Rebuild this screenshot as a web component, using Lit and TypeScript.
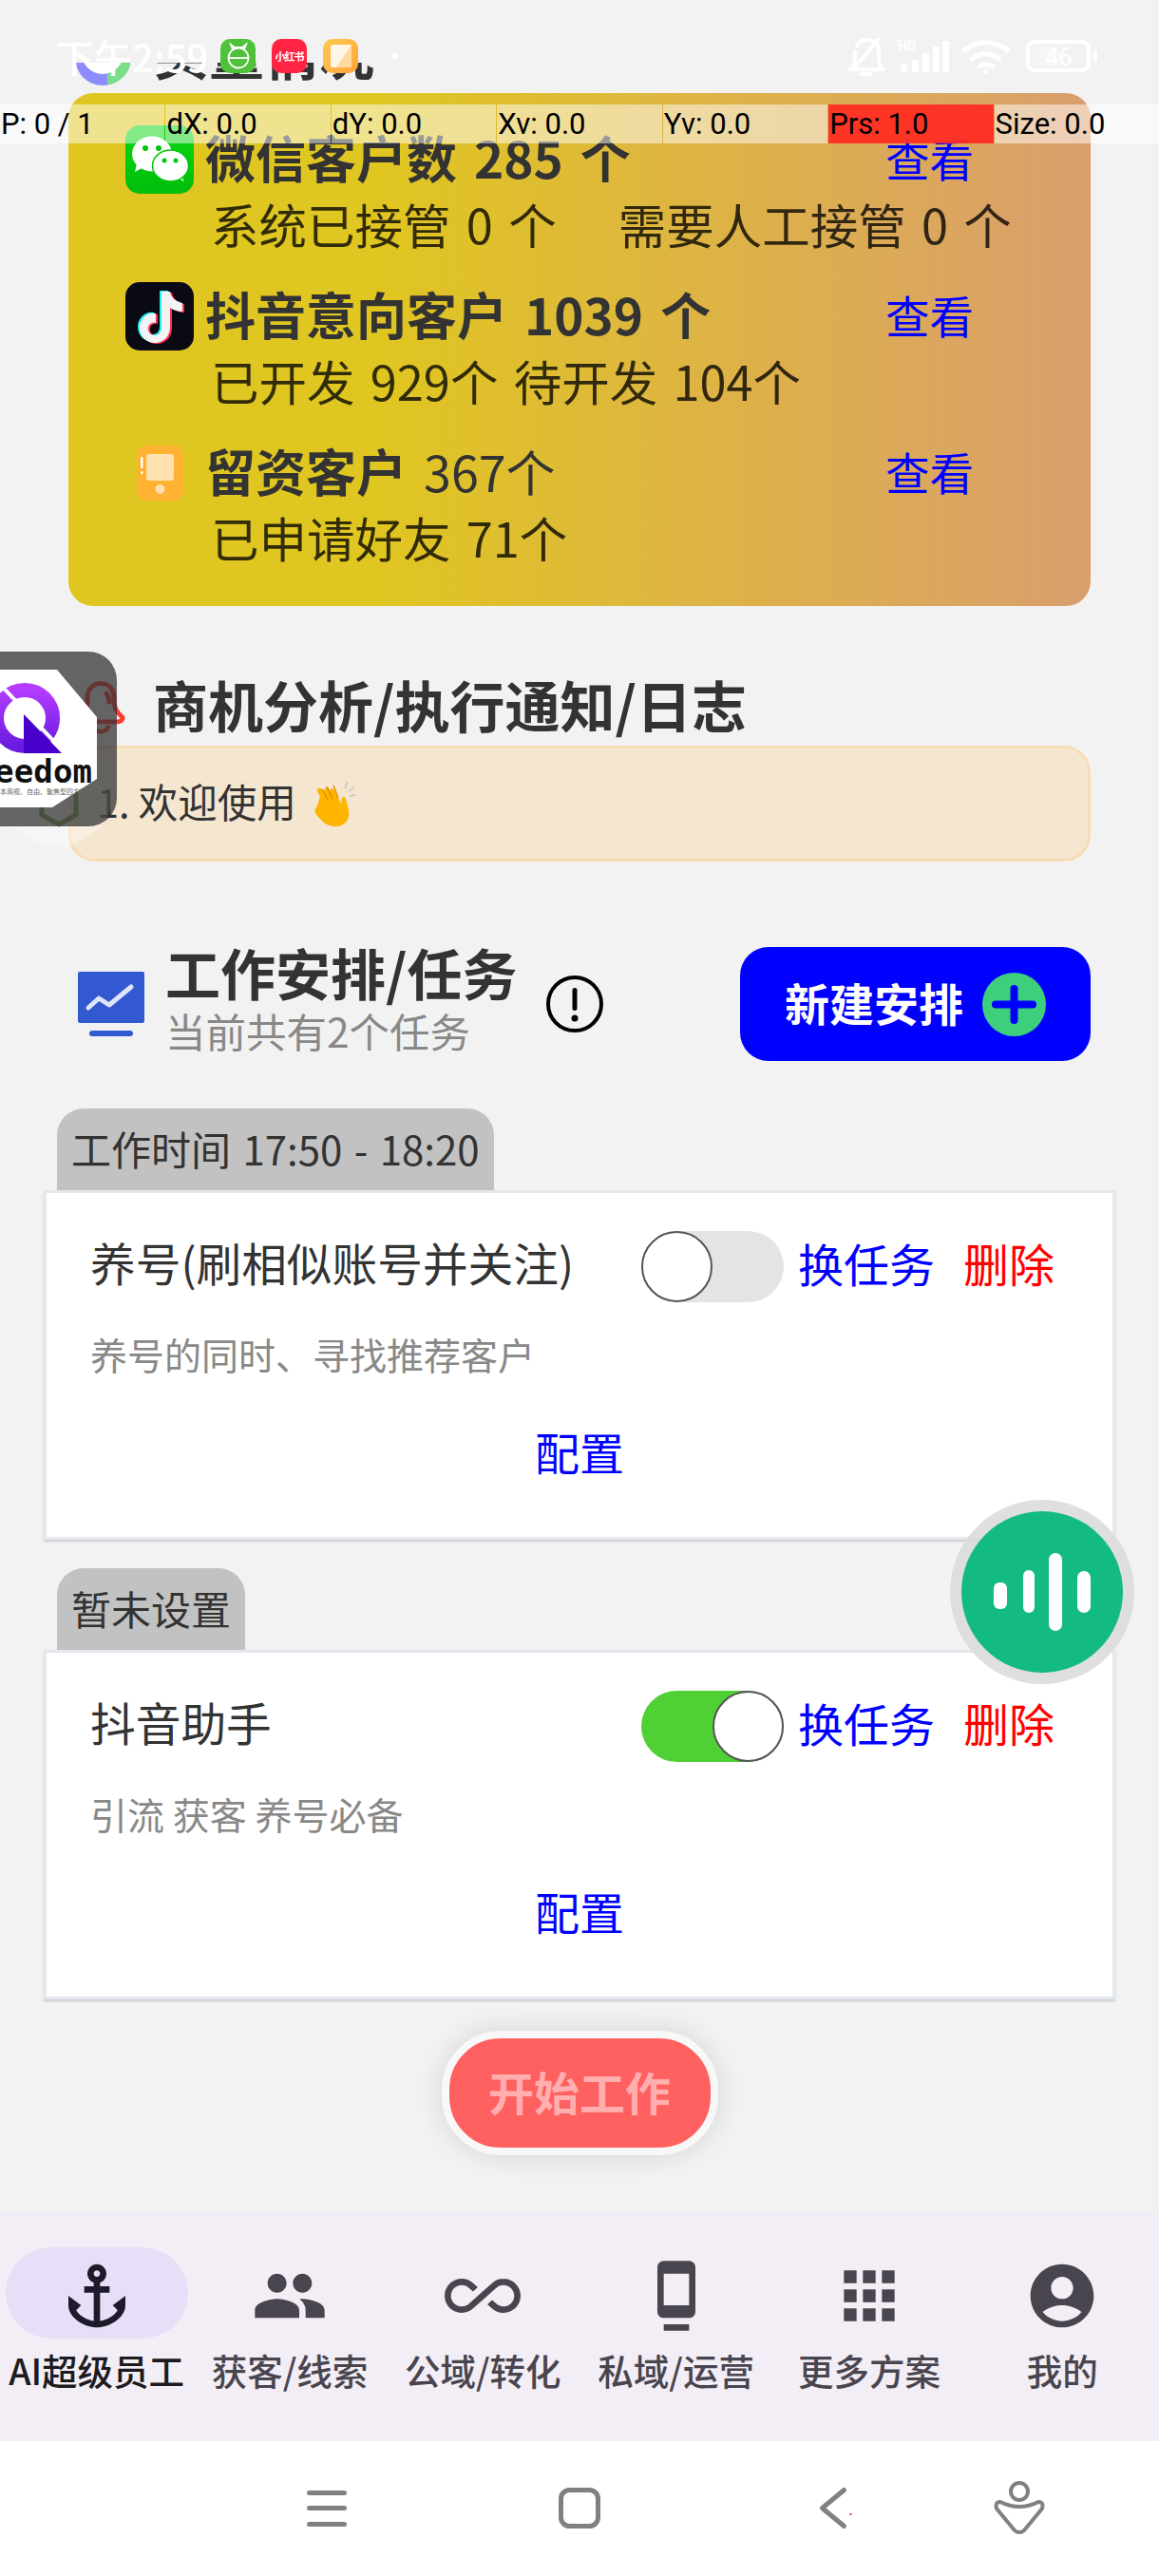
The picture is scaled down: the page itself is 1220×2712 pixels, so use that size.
import { LitElement, html, css } from "lit";
import { customElement } from "lit/decorators.js";

const wechat = html`<svg class="ico" viewBox="0 0 72 72"><defs><linearGradient id="wg" x1="0" y1="0" x2="0" y2="1"><stop offset="0" stop-color="#0ad80f"/><stop offset="1" stop-color="#00bd0b"/></linearGradient></defs><rect width="72" height="72" rx="15" fill="url(#wg)"/><path d="M12 40l-2 9 9-5z" fill="#fff"/><ellipse cx="28" cy="30" rx="21" ry="18.500" fill="#fff"/><circle cx="21" cy="24" r="3" fill="#00c70a"/><circle cx="35" cy="24" r="3" fill="#00c70a"/><path d="M58 52l4 7-9-4z" fill="#fff"/><ellipse cx="47.500" cy="42.500" rx="19" ry="16.500" fill="#fff" stroke="#00c70a" stroke-width="1.500"/><circle cx="41" cy="37" r="2.500" fill="#00c70a"/><circle cx="53" cy="37" r="2.500" fill="#00c70a"/></svg>`;
const notePath = "M38 10h9c1 6 6 11 13 12v9c-5 0-10-2-13-4v21c0 9-7 16-16 16s-16-7-16-16 8-17 17-15v10c-4-1-8 1-8 6 0 4 3 7 7 7s7-3 7-8z";
const tiktok = html`<svg class="ico" viewBox="0 0 72 72"><rect width="72" height="72" rx="15" fill="#0a0a14"/><path d=${notePath} fill="#25f4ee" transform="translate(-2 -1)"/><path d=${notePath} fill="#fe2c55" transform="translate(2 1)"/><path d=${notePath} fill="#f3f3f3"/></svg>`;
const phone = html`<svg class="ico-phone" viewBox="0 0 49 58"><rect width="49" height="58" rx="10" fill="#ffb232"/><rect x="10" y="9" width="29" height="28" rx="3" fill="#ffe0b0"/><circle cx="24.500" cy="46" r="5" fill="#ffe0b0"/><rect x="4" y="12" width="2.500" height="12" rx="1" fill="#fff"/><rect x="4" y="27" width="2.500" height="3" rx="1" fill="#fff"/></svg>`;

const P = {
  anchor: "M17 15l1.55 1.55c-.96 1.69-3.33 3.04-5.55 3.37V11h3V9h-3V7.82C14.16 7.4 15 6.3 15 5c0-1.65-1.35-3-3-3S9 3.35 9 5c0 1.3.84 2.4 2 2.82V9H8v2h3v8.92c-2.22-.33-4.59-1.68-5.55-3.37L7 15l-4-3v3c0 3.88 4.92 7 9 7s9-3.12 9-7v-3l-4 3zM12 4c.55 0 1 .45 1 1s-.45 1-1 1-1-.45-1-1 .45-1 1-1z",
  people: "M16 11c1.66 0 2.99-1.34 2.99-3S17.66 5 16 5c-1.66 0-3 1.34-3 3s1.34 3 3 3zm-8 0c1.66 0 2.99-1.34 2.99-3S9.66 5 8 5C6.34 5 5 6.34 5 8s1.34 3 3 3zm0 2c-2.33 0-7 1.17-7 3.5V19h14v-2.5c0-2.33-4.67-3.5-7-3.5zm8 0c-.29 0-.62.02-.97.05 1.16.84 1.97 1.97 1.97 3.45V19h6v-2.5c0-2.33-4.67-3.5-7-3.5z",
  inf: "M18.6 6.62c-1.44 0-2.8.56-3.77 1.53L12 10.66 10.48 12h.01L7.8 14.39c-.64.64-1.49.99-2.4.99-1.87 0-3.39-1.51-3.39-3.38S3.53 8.62 5.4 8.62c.91 0 1.76.35 2.44 1.03l1.13 1 1.51-1.34L9.22 8.2C8.2 7.18 6.84 6.62 5.4 6.62 2.42 6.62 0 9.04 0 12s2.42 5.38 5.4 5.38c1.44 0 2.8-.56 3.77-1.53l2.83-2.5.01.01L13.52 12h-.01l2.69-2.39c.64-.64 1.49-.99 2.4-.99 1.87 0 3.39 1.51 3.39 3.38s-1.52 3.38-3.39 3.38c-.9 0-1.76-.35-2.44-1.03l-1.14-1.01-1.51 1.34 1.27 1.12c1.02 1.01 2.37 1.57 3.82 1.57 2.98 0 5.4-2.41 5.4-5.38s-2.42-5.37-5.4-5.37z",
  dock: "M8 23h8v-2H8v2zm8-21.99L8 1c-1.1 0-2 .9-2 2v14c0 1.1.9 2 2 2h8c1.1 0 2-.9 2-2V3c0-1.1-.9-1.99-2-1.99zM16 15H8V5h8v10z",
  apps: "M4 8h4V4H4v4zm6 12h4v-4h-4v4zm-6 0h4v-4H4v4zm0-6h4v-4H4v4zm6 0h4v-4h-4v4zm6-10v4h4V4h-4zm-6 4h4V4h-4v4zm6 6h4v-4h-4v4zm0 6h4v-4h-4v4z",
  me: "M12 2C6.48 2 2 6.48 2 12s4.48 10 10 10 10-4.48 10-10S17.52 2 12 2zm0 4c1.93 0 3.5 1.57 3.5 3.5S13.93 13 12 13s-3.5-1.57-3.5-3.5S10.07 6 12 6zm0 14c-2.03 0-4.43-.82-6.14-2.88C7.55 15.8 9.68 15 12 15s4.45.8 6.14 2.12C16.43 19.18 14.03 20 12 20z",
};
const navItems = [
  { d: P.anchor, t: "AI超级员工", active: true },
  { d: P.people, t: "获客/线索" },
  { d: P.inf, t: "公域/转化" },
  { d: P.dock, t: "私域/运营" },
  { d: P.apps, t: "更多方案" },
  { d: P.me, t: "我的" },
];
const tasks = [
  { tab: "工作时间 17:50 - 18:20", title: "养号(刷相似账号并关注)", desc: "养号的同时、寻找推荐客户", on: false },
  { tab: "暂未设置", title: "抖音助手", desc: "引流 获客 养号必备", on: true },
];
const debugCells = ["P: 0 / 1", "dX: 0.0", "dY: 0.0", "Xv: 0.0", "Yv: 0.0", "Prs: 1.0", "Size: 0.0"];

@customElement("app-root")
export class AppRoot extends LitElement {
  static styles = css`
    :host { display: block; width: 1220px; height: 2712px; position: relative; overflow: hidden; background: #f2f2f2; font-family: "Noto Sans CJK SC", "Noto Sans", sans-serif; color: #333; }
    * { box-sizing: border-box; }
    svg { display: block; flex: none; }
    .page { height: 2712px; display: flex; flex-direction: column; }
    .content { flex: 1; min-height: 0; display: flex; flex-direction: column; }
    .h1 { font-size: 58px; font-weight: 700; line-height: 64px; padding-bottom: 6px; color: #333; white-space: nowrap; }
    .top-head { display: flex; align-items: center; gap: 25px; padding: 25px 0 0 79px; height: 89px; }
    .card { margin: 9px 72px 0; height: 540px; border-radius: 26px; padding: 34px 123px 34px 60px; display: flex; flex-direction: column; gap: 23px; background: linear-gradient(90deg, #e0c620 30%, #da9e6e 100%); }
    .row { display: grid; grid-template-columns: 72px 1fr auto; column-gap: 12px; grid-template-rows: 71px 71px; align-items: center; }
    .ico { width: 72px; height: 72px; }
    .ico-phone { width: 49px; height: 58px; justify-self: center; }
    .row .t { align-self: start; font-size: 53px; font-weight: 700; color: #333; line-height: 67px; word-spacing: 6px; white-space: nowrap; }
    .row .t span { font-weight: 400; font-size: 52px; }
    .link { align-self: start; font-size: 46.500px; color: #00f; line-height: 67px; }
    .row .s { grid-column: 2 / 4; align-self: start; padding-left: 6px; font-size: 50.500px; line-height: 65px; word-spacing: 5px; color: rgba(0,0,0,.78); white-space: nowrap; display: flex; gap: 65px; }
    .sec2 { display: flex; align-items: center; gap: 29px; height: 72px; margin-top: 70px; padding-left: 80px; }
    .notice { margin: 5px 72px 0; height: 122px; border: 3px solid #f7ddb5; border-radius: 28px; background: #f5e6d0; display: flex; align-items: center; gap: 17px; padding-left: 27px; font-size: 41.500px; color: #333; }
    .notice span { padding-bottom: 6px; }
    .sec3 { display: flex; align-items: center; margin-top: 90px; padding: 0 72px 0 82px; height: 120px; }
    .sec3 .col { width: 370px; margin-left: 22px; margin-right: 31px; display: flex; flex-direction: column; }
    .sec3 .h1 { line-height: 50px; padding-bottom: 8px; }
    .sec3 .sub { font-size: 42.500px; line-height: 50px; padding: 4px 0 6px; color: #888; white-space: nowrap; }
    .new { margin-left: auto; width: 369px; height: 120px; border-radius: 30px; background: #00f; color: #fff; display: flex; align-items: center; justify-content: center; gap: 20px; font-size: 47px; font-weight: 700; }
    .new span { padding-bottom: 6px; }
    .tasks { display: flex; flex-direction: column; margin: 50px 46px 0; gap: 30px; }
    .task { display: flex; flex-direction: column; }
    .tab { align-self: flex-start; margin-left: 14px; height: 86px; padding: 0 15px 4px; display: flex; align-items: center; border-radius: 28px 28px 0 0; background: #c2c2c2; font-size: 42px; word-spacing: 3px; color: #333; white-space: nowrap; }
    .tcard { height: 368px; background: #fff; border: 3px solid #e3e9ef; box-shadow: 0 2px 2px rgba(0,0,0,.16); padding: 40px 61px 0 46px; display: flex; flex-direction: column; }
    .trow { display: flex; align-items: center; height: 75px; font-size: 48px; }
    .trow span { padding-bottom: 10px; }
    .trow .tt { flex: 1; white-space: nowrap; color: #333; font-size: 47.700px; }
    .toggle { width: 150px; height: 75px; border-radius: 38px; background: #e4e4e4; margin-right: 15px; display: flex; justify-content: flex-start; }
    .toggle.on { background: #4fd135; justify-content: flex-end; }
    .knob { width: 75px; height: 75px; border-radius: 50%; background: #fff; border: 2px solid #555; }
    .blue { color: #00f; }
    .red { color: #f00; margin-left: 30px; }
    .desc { margin-top: 29px; font-size: 39px; line-height: 50px; padding-bottom: 6px; color: #888; white-space: nowrap; }
    .cfg { margin-top: 45px; font-size: 47px; line-height: 54px; padding-bottom: 6px; color: #00f; text-align: center; margin-right: -15px; }
    .start { align-self: center; margin-top: 33px; width: 291px; height: 131px; border: 8px solid #f8f8f8; border-radius: 62px; background: #ff6060; box-shadow: 0 0 30px rgba(0,0,0,.12); display: flex; align-items: center; justify-content: center; font-size: 48px; padding-bottom: 6px; font-weight: 700; color: rgba(255,255,255,.5); }
    .nav { height: 241px; background: #f3eef5; display: grid; grid-template-columns: repeat(6, 1fr); padding-top: 37px; }
    .item { display: flex; flex-direction: column; align-items: center; }
    .pill { width: 192px; height: 96px; border-radius: 48px; padding-top: 11px; display: flex; justify-content: center; }
    .pill svg { width: 80px; height: 80px; fill: #49454f; }
    .item.active .pill { background: #e8def8; }
    .item.active .pill svg { fill: #1d1b2a; }
    .lab { margin-top: 11px; font-size: 37.500px; line-height: 44px; color: #49454f; white-space: nowrap; font-weight: 500; }
    .item.active .lab { color: #1d1b20; }
    .sys { height: 142px; width: 1220px; background: #fff; }
    .status { position: absolute; left: 0; top: 0; width: 1220px; height: 66px; background: #f2f2f2; display: flex; align-items: flex-start; padding: 41px 65px 0 59px; color: #fff; }
    .time { width: 173px; font-size: 40px; line-height: 36px; font-weight: 500; white-space: nowrap; }
    .app { width: 37px; height: 36px; border-radius: 10px; margin-right: 17px; display: flex; align-items: center; justify-content: center; }
    .xhs { background: #ff2442; font-size: 11px; font-weight: 700; letter-spacing: -1px; color: #fff; white-space: nowrap; }
    .dotw { width: 6px; height: 6px; border-radius: 50%; background: #fff; margin: 15px 0 0 19px; }
    .sright { margin-left: auto; display: flex; align-items: flex-start; }
    .debug { position: absolute; left: 0; top: 110px; width: 1220px; height: 41px; display: grid; grid-template-columns: repeat(7, 1fr); gap: 1px; font-family: Roboto, sans-serif; font-size: 31px; line-height: 41px; color: #000; }
    .debug div { background: rgba(255,255,255,.5); padding-left: 1px; white-space: nowrap; overflow: hidden; }
    .debug .prs { background: rgba(255,45,35,.95); }
    .float { position: absolute; left: 0; top: 686px; }
    .voice { position: absolute; left: 999px; top: 1578px; }
  `;

  private task(t: (typeof tasks)[number]) {
    return html`<div class="task">
      <div class="tab">${t.tab}</div>
      <div class="tcard">
        <div class="trow"><span class="tt">${t.title}</span>
          <div class="toggle ${t.on ? "on" : ""}"><div class="knob"></div></div>
          <span class="blue">换任务</span><span class="red">删除</span></div>
        <div class="desc">${t.desc}</div>
        <div class="cfg">配置</div>
      </div>
    </div>`;
  }

  render() {
    return html`
    <div class="page">
      <div class="content">
        <div class="top-head">
          <svg width="58" height="58" viewBox="0 0 58 58" style="margin-top:8px"><circle cx="29" cy="29" r="29" fill="#8c8cff"/><path d="M34 0A29 29 0 0 1 34 57.500Z" fill="#7bdc8b"/><circle cx="29" cy="24" r="22" fill="#fff"/></svg>
          <div class="h1">买量情况</div>
        </div>
        <div class="card">
          <div class="row">${wechat}<div class="t">微信客户数 285 个</div><div class="link">查看</div>
            <div class="s"><span>系统已接管 0 个</span><span>需要人工接管 0 个</span></div></div>
          <div class="row">${tiktok}<div class="t">抖音意向客户 1039 个</div><div class="link">查看</div>
            <div class="s"><span>已开发 929个 待开发 104个</span></div></div>
          <div class="row">${phone}<div class="t">留资客户 <span>367个</span></div><div class="link">查看</div>
            <div class="s"><span>已申请好友 71个</span></div></div>
        </div>
        <div class="sec2">
          <svg width="52" height="58" viewBox="0 0 52 62" preserveAspectRatio="none" fill="none" stroke="#ff3b30" stroke-width="5" stroke-linecap="round" stroke-linejoin="round"><path d="M26 5c-9 0-14 7-14 16 0 11-2 16-9 22 0 3 2 5 5 5h36c3 0 5-2 5-5-7-6-9-11-9-22 0-9-5-16-14-16z"/><path d="M18 54c2 4 5 5 8 5s6-1 8-5"/><path d="M32 16c2 3 3 6 3 10"/></svg>
          <div class="h1">商机分析/执行通知/日志</div>
        </div>
        <div class="notice"><span>1. 欢迎使用</span>
          <svg width="46" height="48" viewBox="0 0 46 48"><path d="M6 24L3 30c-1 3 0 5 3 8l6 6c5 4 12 5 18 3 7-3 9-9 8-16l-3-12c-1-3-4-3-4 0l-1 5-7-14c-2-3-5-2-4 1l-2-3c-2-2-5-1-4 2L8 8c-2-1-4 1-3 3l3 6-1 2z" fill="#ffb400"/><path d="M10 9l6 11M15 6l6 13M22 5l5 13" stroke="#e08e00" stroke-width="1.500" fill="none"/><path d="M34 8l3-7M38 11l6-4M39 16l6-1" stroke="#b9c4cc" stroke-width="1.500" fill="none"/></svg>
        </div>
        <div class="sec3">
          <svg width="70" height="68" viewBox="0 0 70 68"><rect width="70" height="54" rx="2" fill="#3359d0"/><rect x="12" y="62" width="46" height="6" rx="3" fill="#3359d0"/><path d="M11 38l11-10 11 7L56 16" fill="none" stroke="#dfe6fb" stroke-width="5" stroke-linecap="round" stroke-linejoin="round"/></svg>
          <div class="col"><div class="h1">工作安排/任务</div><div class="sub">当前共有2个任务</div></div>
          <svg width="60" height="60" viewBox="0 0 60 60"><circle cx="30" cy="30" r="28" fill="none" stroke="#000" stroke-width="4"/><rect x="27.500" y="13" width="5" height="24" rx="2.500" fill="#000"/><circle cx="30" cy="45" r="3.500" fill="#000"/></svg>
          <div class="new"><span>新建安排</span>
            <svg width="67" height="67" viewBox="0 0 67 67"><circle cx="33.500" cy="33.500" r="33.500" fill="#3ecf7c"/><path d="M33.500 17v33M14 33.500h39" stroke="#00f" stroke-width="8" stroke-linecap="round"/></svg></div>
        </div>
        <div class="tasks">${tasks.map((t) => this.task(t))}</div>
        <div class="start">开始工作</div>
      </div>
      <nav class="nav">
        ${navItems.map((n) => html`<div class="item ${n.active ? "active" : ""}"><div class="pill"><svg viewBox="0 0 24 24"><path d=${n.d}/></svg></div><div class="lab">${n.t}</div></div>`)}
      </nav>
      <svg class="sys" viewBox="0 0 1220 142" fill="none" stroke="#808080" stroke-width="5" stroke-linecap="round" stroke-linejoin="round">
        <path d="M325.500 54.500h37M325.500 70.500h37M325.500 87.500h37"/>
        <rect x="590.500" y="51.500" width="39" height="38" rx="9"/>
        <path d="M888.500 51.500L865.500 70.500 888.500 89.500"/>
        <rect x="894.500" y="76" width="2" height="2" fill="#f33" stroke="none"/>
        <circle cx="1073" cy="53" r="9" stroke-width="4"/>
        <path d="M1053 64q10 5 20 5t20-5q6 0 4 7l-19 23q-5 4-10 0l-19-23q-2-7 4-7z" stroke-width="4"/>
      </svg>
    </div>

    <svg class="voice" width="196" height="196" viewBox="0 0 196 196"><circle cx="98" cy="98" r="97" fill="#dcdcdc" fill-opacity=".9"/><circle cx="98" cy="98" r="85" fill="#14bb80"/><rect x="47" y="88" width="14" height="28" rx="6" fill="#fff"/><rect x="78" y="75" width="12" height="45" rx="6" fill="#fff"/><rect x="105" y="57" width="14" height="82" rx="7" fill="#fff"/><rect x="135" y="76" width="14" height="44" rx="7" fill="#fff"/></svg>

    <svg class="float" width="130" height="206" viewBox="0 0 130 206">
      <circle cx="60" cy="145" r="60" fill="#fff" fill-opacity=".35"/>
      <path d="M44 148l18-10 18 10v24l-18 10-18-10z" fill="none" stroke="#7fa860" stroke-width="5"/>
      <path d="M-30 0H93a30 30 0 0 1 30 30V154a30 30 0 0 1-30 30H-30z" fill="#323232" fill-opacity=".74"/>
      <path d="M0 19H60L102 69V134L55 164H0z" fill="#fff"/>
      <defs><linearGradient id="q" x1="0" y1="0" x2="0" y2="1"><stop offset="0" stop-color="#b33cff"/><stop offset="1" stop-color="#6a1be0"/></linearGradient></defs>
      <circle cx="26" cy="70" r="29.500" fill="none" stroke="url(#q)" stroke-width="15"/>
      <path d="M25 66L65 107H25z" fill="#4a00cc"/>
      <path d="M-6 28L62 100" stroke="#fff" stroke-width="4"/>
      <text x="-6" y="138" font-family="'DejaVu Sans Mono', monospace" font-size="34" font-weight="700" fill="#111" textLength="103">eedom</text>
      <text x="0" y="150" font-family="'Noto Sans CJK SC', sans-serif" font-size="7" fill="#666">本商视、自由、聚焦型四方平</text>
    </svg>

    <div class="status">
      <div class="time">下午2:59</div>
      <div class="app" style="background:#4fc13a">
        <svg width="24" height="30" viewBox="0 0 24 30" fill="none" stroke="#fff" stroke-width="1.800"><path d="M6 8L4 3l4 3h8l4-3-2 5"/><circle cx="12" cy="17" r="10.500"/><path d="M2 17h20"/></svg>
      </div>
      <div class="app xhs">小红书</div>
      <div class="app" style="background:linear-gradient(135deg,#ffc94f,#ffa33a)">
        <svg width="22" height="24" viewBox="0 0 22 24"><rect width="22" height="24" rx="2" fill="#fff5e8"/><path d="M22 0v24H6z" fill="#ffd9a0"/></svg>
      </div>
      <div class="dotw"></div>
      <div class="sright">
        <svg width="40" height="40" viewBox="0 0 40 40" fill="none" stroke="#fff" stroke-width="4" stroke-linecap="round" style="margin:-1px 13px 0 0"><path d="M2 33h36c-4-3-5-7-5-12V13c0-7-5-11-12-11-5 0-9 2-11 6M8 14v8c0 4-1 8-3 10"/><path d="M33 1L7 32"/><path d="M15 38h10"/></svg>
        <svg width="54" height="36" viewBox="0 0 54 36" fill="#fff" style="margin-right:14px"><rect x="3" y="27" width="7" height="8" rx="1"/><rect x="15" y="22" width="7" height="13" rx="1"/><rect x="26" y="15" width="7" height="20" rx="1"/><rect x="37" y="8" width="7" height="27" rx="1"/><rect x="47" y="2" width="7" height="33" rx="1"/><text x="0" y="12" font-family="Roboto,sans-serif" font-size="14" font-weight="700">HD</text></svg>
        <svg width="50" height="37" viewBox="0 0 50 37" fill="none" stroke="#fff" stroke-width="5" stroke-linecap="round" style="margin-right:17px"><path d="M2 12C15 1 33 1 48 12"/><path d="M10 21c9-7 20-7 29 0"/><path d="M18 29c4-3 10-3 14 0"/><circle cx="25" cy="34" r="2.500" fill="#fff" stroke="none"/></svg>
        <svg width="75" height="34" viewBox="0 0 75 34" style="margin-top:1px"><rect x="2" y="2" width="64" height="30" rx="7" fill="none" stroke="#fff" stroke-width="4"/><rect x="7" y="7" width="28" height="20" rx="3" fill="#fff" fill-opacity=".3"/><text x="34" y="27" text-anchor="middle" font-family="Roboto,sans-serif" font-size="26" fill="#fff">46</text><rect x="71" y="11" width="4" height="12" rx="2" fill="#fff"/></svg>
      </div>
    </div>

    <div class="debug">${debugCells.map((c, i) => html`<div class=${i === 5 ? "prs" : ""}>${c}</div>`)}</div>
    `;
  }
}
